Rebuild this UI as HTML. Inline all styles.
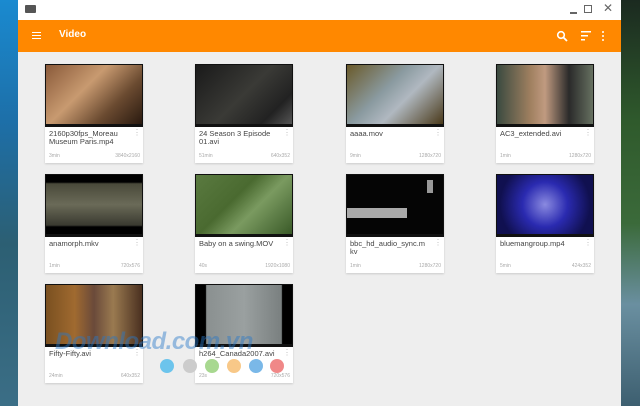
<!DOCTYPE html>
<html><head><meta charset="utf-8"><style>
*{margin:0;padding:0;box-sizing:border-box}
body{width:640px;height:406px;overflow:hidden;position:relative;font-family:"Liberation Sans",sans-serif;background:#2a5a7a}
.bgl{position:absolute;left:0;top:0;width:18px;height:406px;background:linear-gradient(180deg,#1a8ad0 0%,#1d6fa8 30%,#2c5f73 60%,#3b6e86 100%)}
.bgr{position:absolute;left:621px;top:0;width:19px;height:406px;background:linear-gradient(180deg,#1b2a20 0%,#2f5a2c 30%,#3b6a3a 55%,#6a8fa0 75%,#3d5f70 100%)}
.win{position:absolute;left:18px;top:0;width:603px;height:406px;background:#eeeeee}
.title{height:20px;background:#fff;position:relative}
.bar{height:32px;background:#ff8800;position:relative;color:#fff}
.card{position:absolute;width:98px;background:#fff;box-shadow:0 1px 2px rgba(0,0,0,.15)}
.th{height:63px;border:1px solid #111;border-bottom-width:3px}
.nm{font-size:7.5px;color:#444;padding:3px 10px 0 4px;height:22px;line-height:8px;position:relative}
.nm:after{content:"⋮";position:absolute;right:2px;top:2px;color:#bbb;font-size:8px}
.mt{font-size:5px;color:#aaa;padding:0 3px 4px 4px;display:flex;justify-content:space-between;height:14px;align-items:flex-end}
.dot{position:absolute;width:14px;height:14px;border-radius:50%;top:359px}
.wm{position:absolute;left:55px;top:328px;font-size:24px;font-weight:bold;font-style:italic;color:rgba(40,120,200,.45);letter-spacing:-0.5px}
</style></head><body>
<div class="bgl"></div><div class="bgr"></div>
<div class="win">
<div class="title"><div style="position:absolute;left:7px;top:5px;width:11px;height:8px;background:#555;border-radius:1px"></div>
<div style="position:absolute;left:552px;top:12px;width:7px;height:1.5px;background:#666"></div>
<div style="position:absolute;left:566px;top:5px;width:8px;height:8px;border:1.5px solid #666"></div>
<div style="position:absolute;left:585px;top:1px;font-size:12px;color:#666">✕</div></div>
<div class="bar">
<div style="position:absolute;left:14px;top:12px;width:9px;height:7px;border-top:1.5px solid #fff;border-bottom:1.5px solid #fff"><div style="margin-top:1.5px;height:1.5px;background:#fff"></div></div>
<div style="position:absolute;left:41px;top:9px;font-size:10px;font-weight:bold">Video</div>
<svg style="position:absolute;left:538px;top:10px" width="12" height="12"><circle cx="5" cy="5" r="3.3" stroke="#fff" stroke-width="1.6" fill="none"/><line x1="7.5" y1="7.5" x2="11" y2="11" stroke="#fff" stroke-width="1.8"/></svg>
<svg style="position:absolute;left:562px;top:10px" width="12" height="12"><rect x="1" y="1" width="10" height="1.5" fill="#fff"/><rect x="1" y="5" width="7" height="1.5" fill="#fff"/><rect x="1" y="9" width="4" height="1.5" fill="#fff"/></svg>
<svg style="position:absolute;left:583px;top:10px" width="4" height="12"><circle cx="2" cy="2" r="1" fill="#fff"/><circle cx="2" cy="6" r="1" fill="#fff"/><circle cx="2" cy="10" r="1" fill="#fff"/></svg>
</div>
</div>

<div class="card" style="left:45px;top:64px"><div class="th" style="background:linear-gradient(135deg,#8a5a3a,#c89a70 40%,#6a4a30 70%,#2a1a10)"></div><div class="nm">2160p30fps_Moreau Museum Paris.mp4</div><div class="mt"><span>3min</span><span>3840x2160</span></div></div>
<div class="card" style="left:195px;top:64px"><div class="th" style="background:linear-gradient(135deg,#1a1a1a,#3a3a36 50%,#222 80%,#555)"></div><div class="nm">24 Season 3 Episode 01.avi</div><div class="mt"><span>51min</span><span>640x352</span></div></div>
<div class="card" style="left:346px;top:64px"><div class="th" style="background:linear-gradient(135deg,#6a5a2a,#8a9aa0 40%,#b0b8c0 60%,#4a3a1a)"></div><div class="nm">aaaa.mov</div><div class="mt"><span>9min</span><span>1280x720</span></div></div>
<div class="card" style="left:496px;top:64px"><div class="th" style="background:linear-gradient(90deg,#3a4a40,#a08060 35%,#c09a80 50%,#2a2a2a 75%,#667060)"></div><div class="nm">AC3_extended.avi</div><div class="mt"><span>1min</span><span>1280x720</span></div></div>

<div class="card" style="left:45px;top:174px"><div class="th" style="background:linear-gradient(180deg,#000 12%,#4a4a3a 15%,#6a6a58 50%,#3a3a30 85%,#000 88%)"></div><div class="nm">anamorph.mkv</div><div class="mt"><span>1min</span><span>720x576</span></div></div>
<div class="card" style="left:195px;top:174px"><div class="th" style="background:linear-gradient(135deg,#5a7a40,#4a6a30 40%,#7a9a60 60%,#3a5a28)"></div><div class="nm">Baby on a swing.MOV</div><div class="mt"><span>40s</span><span>1920x1080</span></div></div>
<div class="card" style="left:346px;top:174px"><div class="th" style="background:#050505;position:relative"><div style="position:absolute;left:0;top:33px;width:60px;height:10px;background:#aaa"></div><div style="position:absolute;left:80px;top:5px;width:6px;height:13px;background:#999"></div></div><div class="nm">bbc_hd_audio_sync.m kv</div><div class="mt"><span>1min</span><span>1280x720</span></div></div>
<div class="card" style="left:496px;top:174px"><div class="th" style="background:radial-gradient(circle at 50% 50%,#8a8ae0,#2a2ab0 40%,#101050 80%)"></div><div class="nm">bluemangroup.mp4</div><div class="mt"><span>5min</span><span>424x352</span></div></div>

<div class="card" style="left:45px;top:284px"><div class="th" style="background:linear-gradient(90deg,#7a5020,#a06a30 30%,#6a4a3a 50%,#9a7a50 70%,#4a3020)"></div><div class="nm">Fifty-Fifty.avi</div><div class="mt"><span>24min</span><span>640x352</span></div></div>
<div class="card" style="left:195px;top:284px"><div class="th" style="background:linear-gradient(90deg,#000 10%,#8a9090 11%,#9aa0a0 50%,#7a8080 89%,#000 90%)"></div><div class="nm">h264_Canada2007.avi</div><div class="mt"><span>23s</span><span>720x576</span></div></div>

<div class="wm">Download.com.vn</div>
<div class="dot" style="left:160px;background:#6cc4ec"></div>
<div class="dot" style="left:183px;background:#ccc"></div>
<div class="dot" style="left:205px;background:#a8d890"></div>
<div class="dot" style="left:227px;background:#f8c888"></div>
<div class="dot" style="left:249px;background:#7ab8e8"></div>
<div class="dot" style="left:270px;background:#f08888"></div>
</body></html>
